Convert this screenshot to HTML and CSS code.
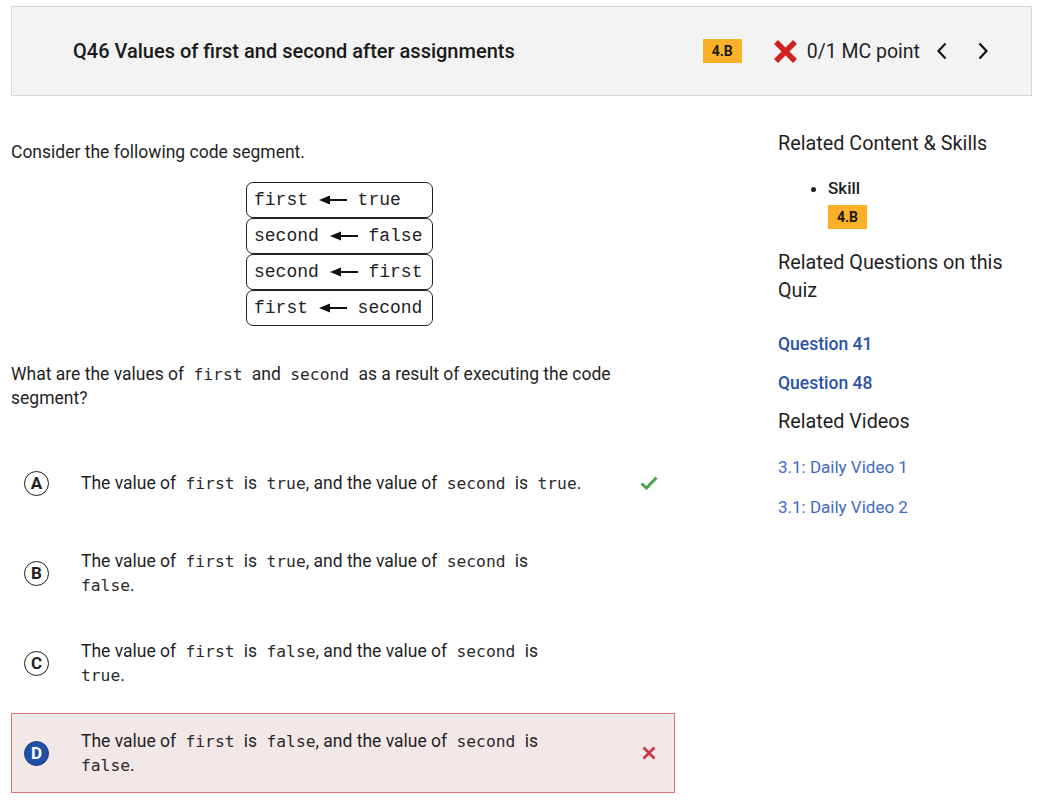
FILE: index.html
```html
<!DOCTYPE html>
<html>
<head>
<meta charset="utf-8">
<link rel="stylesheet" href="styles.css">
</head>
<body>
<header class="qhead">
  <h1 class="qtitle">Q46 Values of first and second after assignments</h1>
  <span class="badge head-badge">4.B</span>
  <span class="score">
    <svg class="xicon" width="25" height="25" viewBox="0 0 25 25"><path d="M3 3 L22 22 M22 3 L3 22" stroke="#d0201f" stroke-width="5.5" stroke-linecap="butt"/></svg>
    <span>0/1 MC point</span>
  </span>
  <span class="nav">
    <svg width="12" height="18" viewBox="0 0 12 18"><path d="M9.5 1.5 L2.5 9 L9.5 16.5" fill="none" stroke="#111" stroke-width="2.2"/></svg>
    <svg width="12" height="18" viewBox="0 0 12 18"><path d="M2.5 1.5 L9.5 9 L2.5 16.5" fill="none" stroke="#111" stroke-width="2.2"/></svg>
  </span>
</header>

<main class="main">
  <section class="left">
    <p class="lead">Consider the following code segment.</p>
    <div class="diagram">
      <div class="drow">first <svg class="arrow" width="28" height="10" viewBox="0 0 28 10"><path d="M0 5 L11 0.5 L11 9.5 Z" fill="#111"/><path d="M10 5 H28" stroke="#111" stroke-width="2"/></svg> true</div>
      <div class="drow">second <svg class="arrow" width="28" height="10" viewBox="0 0 28 10"><path d="M0 5 L11 0.5 L11 9.5 Z" fill="#111"/><path d="M10 5 H28" stroke="#111" stroke-width="2"/></svg> false</div>
      <div class="drow">second <svg class="arrow" width="28" height="10" viewBox="0 0 28 10"><path d="M0 5 L11 0.5 L11 9.5 Z" fill="#111"/><path d="M10 5 H28" stroke="#111" stroke-width="2"/></svg> first</div>
      <div class="drow">first <svg class="arrow" width="28" height="10" viewBox="0 0 28 10"><path d="M0 5 L11 0.5 L11 9.5 Z" fill="#111"/><path d="M10 5 H28" stroke="#111" stroke-width="2"/></svg> second</div>
    </div>
    <p class="question">What are the values of <code>first</code> and <code>second</code> as a result of executing the code segment?</p>

    <div class="options">
      <div class="option">
        <span class="letter">A</span>
        <span class="otext wide">The value of <code>first</code> is <code class="tight">true</code>, and the value of <code>second</code> is <code class="tight">true</code>.</span>
        <span class="mark">
          <svg width="18" height="14" viewBox="0 0 18 14"><path d="M1.5 7.5 L6.5 12 L16.5 1.5" fill="none" stroke="#4ba34a" stroke-width="3"/></svg>
        </span>
      </div>
      <div class="option">
        <span class="letter">B</span>
        <span class="otext">The value of <code>first</code> is <code class="tight">true</code>, and the value of <code>second</code> is <code class="end">false</code>.</span>
        <span class="mark"></span>
      </div>
      <div class="option">
        <span class="letter">C</span>
        <span class="otext">The value of <code>first</code> is <code class="tight">false</code>, and the value of <code>second</code> is <code class="end">true</code>.</span>
        <span class="mark"></span>
      </div>
      <div class="option wrong">
        <span class="letter filled">D</span>
        <span class="otext">The value of <code>first</code> is <code class="tight">false</code>, and the value of <code>second</code> is <code class="end">false</code>.</span>
        <span class="mark">
          <svg width="14" height="14" viewBox="0 0 14 14"><path d="M1.5 1.5 L12.5 12.5 M12.5 1.5 L1.5 12.5" stroke="#d0333f" stroke-width="2.6"/></svg>
        </span>
      </div>
    </div>
  </section>

  <aside class="right">
    <h2 class="rhead">Related Content &amp; Skills</h2>
    <ul class="skills">
      <li>Skill
        <div><span class="badge">4.B</span></div>
      </li>
    </ul>
    <h2 class="rhead rq">Related Questions on this Quiz</h2>
    <a class="qlink first-q">Question 41</a>
    <a class="qlink">Question 48</a>
    <h2 class="rhead rv">Related Videos</h2>
    <a class="vlink first-v">3.1: Daily Video 1</a>
    <a class="vlink">3.1: Daily Video 2</a>
  </aside>
</main>
</body>
</html>
```

FILE: styles.css
```css
* { box-sizing: border-box; }
html, body { margin: 0; padding: 0; background: #fff; }
body {
  font-family: Roboto, "Liberation Sans", sans-serif;
  color: #1f1f1f;
  width: 1046px;
}

code {
  font-family: "DejaVu Sans Mono", "Liberation Mono", monospace;
  font-size: 16.3px;
  line-height: 1;
  color: #2a2a2a;
  padding: 0 5px;
}
code.tight { padding-right: 0; }
code.end { padding: 0; }

.qhead {
  margin: 6px 14px 0 11px;
  height: 90px;
  background: #f3f3f3;
  border: 1px solid #d6d6d6;
  display: flex;
  align-items: center;
  padding: 0 42px 0 61px;
}
.qtitle {
  flex: 1;
  margin: 0;
  font-size: 20px;
  font-weight: 500;
  color: #1a1a1a;
}
.badge {
  display: inline-block;
  background: #fbb02a;
  color: #1a1a1a;
  font-size: 14px;
  font-weight: 700;
  height: 24px;
  line-height: 24px;
  padding: 0 9px;
}
.head-badge { margin-right: 31px; }
.score {
  display: flex;
  align-items: center;
  font-size: 19.5px;
  color: #1f1f1f;
}
.xicon { margin-right: 9px; }
.nav {
  display: flex;
  align-items: center;
  gap: 29px;
  margin-left: 16px;
}
.nav svg { display: block; }

.main {
  display: flex;
  margin-top: 34px;
  padding-left: 11px;
}
.left {
  width: 664px;
  padding-top: 10px;
}
.lead {
  margin: 0;
  font-size: 17.5px;
  line-height: 24px;
}
.diagram {
  margin: 18px 0 0 235px;
  width: 187px;
}
.drow {
  height: 36px;
  border: 1.5px solid #222;
  border-radius: 7px;
  display: flex;
  align-items: center;
  padding-left: 7px;
  font-family: "Liberation Mono", "Courier New", monospace;
  font-size: 18px;
  color: #222;
  white-space: pre;
}
.arrow { margin: 0; }

.question {
  margin: 36px 0 0;
  font-size: 17.5px;
  line-height: 24px;
  width: 640px;
}

.options {
  margin-top: 33px;
  display: flex;
  flex-direction: column;
  gap: 10px;
}
.option {
  min-height: 80px;
  display: flex;
  align-items: center;
  border: 1px solid transparent;
  padding: 0 0 0 12px;
}
.option.wrong {
  background: #f3e8e8;
  border-color: #e2707a;
}
.letter {
  width: 25px;
  height: 25px;
  border: 1.5px solid #1a1a1a;
  border-radius: 50%;
  display: flex;
  align-items: center;
  justify-content: center;
  font-weight: 700;
  font-size: 17px;
  flex: none;
}
.letter.filled {
  background: #1f4fa7;
  color: #fff;
  border-color: #163a80;
}
.otext {
  margin-left: 32px;
  width: 490px;
  font-size: 17.5px;
  line-height: 24px;
}
.otext.wide { width: 540px; }
.mark {
  margin-left: auto;
  width: 50px;
  display: flex;
  justify-content: center;
}

.right {
  margin-left: 103px;
  width: 240px;
}
.rhead {
  margin: 0;
  font-size: 19.8px;
  font-weight: 400;
  line-height: 28px;
  color: #1f1f1f;
}
.skills {
  margin: 18px 0 0;
  padding-left: 50px;
  font-size: 17px;
  font-weight: 500;
  line-height: 24px;
}
.skills .badge { margin-top: 5px; }
.rq { margin-top: 20px; }
.qlink {
  display: block;
  font-size: 17.5px;
  font-weight: 500;
  line-height: 24px;
  color: #2c52a7;
  margin-top: 15px;
}
.qlink.first-q { margin-top: 27px; }
.rv { margin-top: 13px; }
.vlink {
  display: block;
  font-size: 17px;
  line-height: 24px;
  color: #4169c6;
  margin-top: 16px;
}
.vlink.first-v { margin-top: 19px; }
```
